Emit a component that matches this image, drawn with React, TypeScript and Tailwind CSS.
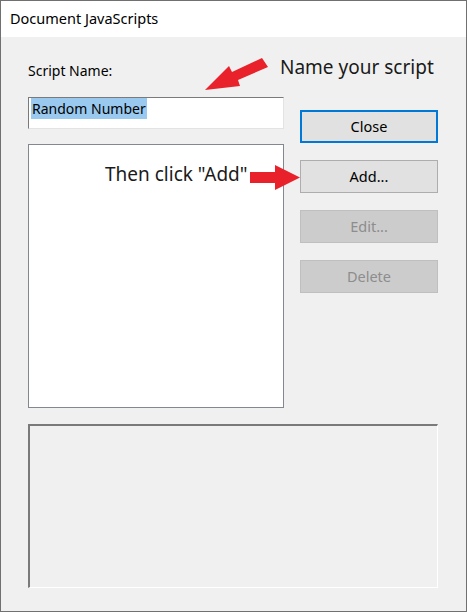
import React from "react";

const font = { fontFamily: '"Noto Sans", "Open Sans", sans-serif' };

function Btn({ label, variant }: { label: string; variant: "default" | "normal" | "disabled" }) {
  const cls =
    variant === "default"
      ? "border-2 border-[#0078d7] bg-[#e1e1e1] text-black"
      : variant === "normal"
      ? "border border-[#adadad] bg-[#e1e1e1] text-black"
      : "border border-[#bfbfbf] bg-[#cccccc] text-[#8d8d8d]";
  return (
    <div className={`h-[33px] w-[138px] flex items-center justify-center text-[14.5px] ${cls}`}>
      {label}
    </div>
  );
}

export default function App() {
  return (
    <div
      className="w-[467px] h-[612px] border border-[#707070] flex flex-col bg-[#f0f0f0] text-black"
      style={font}
    >
      <div className="h-[36px] bg-white flex items-center pl-[9px] text-[14.5px] shrink-0">
        Document JavaScripts
      </div>
      <div className="relative flex-1 flex flex-col px-[27px]">
        <div className="flex gap-[16px]">
          <div className="flex flex-col w-[256px]">
            <div className="h-[60px] pt-[24px] text-[14px] leading-[20px]">Script Name:</div>
            <div className="h-[32px] bg-white border-t border-l border-[#7a7a7a] border-r border-b border-r-[#e3e3e3] border-b-[#e3e3e3] flex items-start pt-[0px] pl-[2px]">
              <span className="bg-[#99c9ef] text-[14px] leading-[21px] px-[1px]">Random Number</span>
            </div>
            <div className="mt-[15px] h-[264px] bg-white border border-[#828790]"></div>
          </div>
          <div className="flex flex-col gap-[17px] pt-[73px]">
            <Btn label="Close" variant="default" />
            <Btn label="Add..." variant="normal" />
            <Btn label="Edit..." variant="disabled" />
            <Btn label="Delete" variant="disabled" />
          </div>
        </div>
        <div className="mt-[16px] h-[164px] w-[410px] border-t-2 border-l-2 border-[#7a7a7a] border-r border-b border-r-[#ffffff] border-b-[#ffffff] bg-[#f0f0f0]"></div>

        {/* annotations */}
        <div className="absolute left-[279px] top-[17px] text-[19px] leading-[26px] text-[#1a1a1a]">
          Name your script
        </div>
        <div className="absolute left-[104px] top-[125px] text-[19px] leading-[24px] text-[#1a1a1a]">
          Then click "Add"
        </div>
        <svg className="absolute left-0 top-0" width="467" height="576" style={{ left: -1, top: -37 }}>
          <polygon
            points="205,90 229,66 232,72 262,58 268,67 238,80 240,86"
            fill="#e8212a"
          />
          <polygon
            points="250,172 275,172 275,165 300,177.5 275,190 275,183 250,183"
            fill="#e8212a"
          />
        </svg>
      </div>
    </div>
  );
}
